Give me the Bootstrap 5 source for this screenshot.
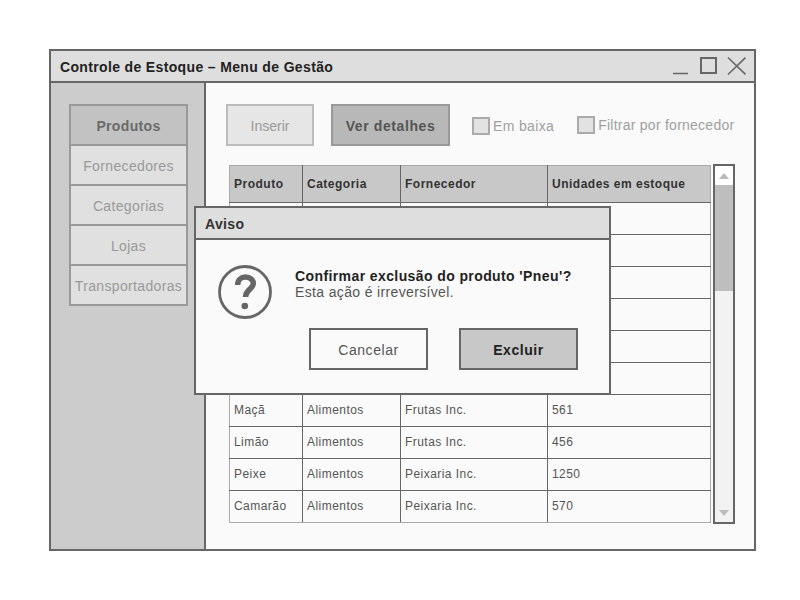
<!DOCTYPE html>
<html lang="pt">
<head>
    <meta charset="UTF-8">
    <meta name="viewport" content="width=device-width, initial-scale=1.0">
    <title>Controle de Estoque</title>
    <link href="https://cdn.jsdelivr.net/npm/bootstrap@5.3.3/dist/css/bootstrap.min.css" rel="stylesheet">
    <style>
        body {
            background-color: #fff;
            font-family: "Liberation Sans", Arial, sans-serif;
            font-size: 14px;
            letter-spacing: .35px;
            color: #000;
            padding: 49px 44px 49px 49px;
        }
        .app-window {
            position: relative;
            width: 707px;
            height: 502px;
            border: 2px solid #666;
            background-color: #fafafa;
        }
        .title-strip {
            height: 32px;
            padding: 0 8px 0 9px;
            background-color: #dedede;
            border-bottom: 2px solid #666;
            color: #222;
        }
        .title-text { font-weight: 700; padding-top: 2px; }
        .side-col {
            width: 155px;
            padding: 21px 16px 0 18px;
            background-color: #ccc;
            border-right: 2px solid #666;
        }
        .side-menu { width: 119px; border: 2px solid #999; border-bottom: 0; }
        .side-item {
            height: 40px;
            padding-top: 2px;
            background-color: #e0e0e0;
            border-bottom: 2px solid #999;
            color: #999;
            white-space: nowrap;
        }
        .side-item.current { background-color: #c2c2c2; color: #6a6a6a; font-weight: 700; }
        .content-col { padding: 21px 0 0 20px; }
        .act-btn {
            height: 42px;
            border: 2px solid #bbb;
            background-color: #e6e6e6;
            color: #999;
            font-size: 14px;
            padding: 2px 0 0;
            border-radius: 0;
        }
        .act-insert { width: 88px; margin-right: 17px; }
        .act-details { width: 119px; background-color: #b8b8b8; border-color: #999; color: #555; font-weight: 700; letter-spacing: .6px; }
        .check-group { gap: 3px; margin: 2px 0 0 22px; }
        .check-group.raised { margin: 0 0 0 23px; letter-spacing: .25px; }
        .check-box { width: 18px; height: 18px; border: 2px solid #aaa; background-color: #e2e2e2; }
        .check-label { color: #a0a0a0; white-space: nowrap; }
        .tbl-zone { margin-top: 19px; margin-left: 3px; gap: 2px; }
        .stock-table { width: 482px; border-collapse: collapse; table-layout: fixed; font-size: 12px; letter-spacing: .45px; background-color: #fafafa; color: #555; }
        .stock-table th, .stock-table td { padding: 0 0 2px 4px; height: 32px; border: 1px solid #666; vertical-align: middle; }
        .stock-table th { height: 37px; padding-bottom: 1px; background-color: #c8c8c8; color: #333; letter-spacing: .5px; }
        .stock-table tr > :first-child { border-left-color: #aaa; }
        .stock-table tr > :last-child { border-right-color: #aaa; }
        .stock-table tr:last-child td { border-bottom-color: #aaa; }
        .stock-table tr:first-child th { border-top-color: #aaa; }
        .scroll-rail { width: 22px; height: 360px; margin-top: -1px; border: 2px solid #666; background-color: #f2f2f2; }
        .scroll-end { height: 19px; }
        .scroll-thumb { height: 106px; background-color: #bebebe; }
        .dialog-box {
            position: absolute;
            left: 143px;
            top: 155px;
            width: 417px;
            height: 189px;
            border: 2px solid #666;
            background-color: #fafafa;
        }
        .dialog-head { height: 32px; padding: 2px 0 0 9px; background-color: #dedede; border-bottom: 2px solid #666; font-weight: 700; color: #333; }
        .dialog-msg { padding: 25px 0 0 22px; gap: 23px; line-height: 16px; color: #555; }
        .dialog-text { padding-top: 3px; }
        .dialog-text strong { color: #222; letter-spacing: .4px; }
        .dialog-actions { gap: 31px; padding: 0 31px 0 0; margin-top: 9px; }
        .dlg-btn { width: 119px; height: 42px; padding: 2px 0 0; font-size: 14px; letter-spacing: .55px; border: 2px solid #666; border-radius: 0; background-color: #fafafa; color: #555; }
        .dlg-btn.primary-act { background-color: #c8c8c8; color: #222; font-weight: 700; }
    </style>
</head>
<body>
    <div class="app-window d-flex flex-column">
        <div class="title-strip d-flex align-items-center justify-content-between">
            <span class="title-text">Controle de Estoque – Menu de Gestão</span>
            <svg width="73" height="20" viewBox="0 0 73 20" fill="none" stroke="#666">
                <path d="M0 17.5H15" stroke-width="1.5"/>
                <rect x="28" y="2" width="15" height="15" stroke-width="2"/>
                <path d="M55 1.5L72.5 18.5M72.5 1.5L55 18.5" stroke-width="1.6"/>
            </svg>
        </div>
        <div class="d-flex flex-grow-1">
            <div class="side-col flex-shrink-0">
                <div class="side-menu">
                    <div class="side-item current d-flex align-items-center justify-content-center">Produtos</div>
                    <div class="side-item d-flex align-items-center justify-content-center">Fornecedores</div>
                    <div class="side-item d-flex align-items-center justify-content-center">Categorias</div>
                    <div class="side-item d-flex align-items-center justify-content-center">Lojas</div>
                    <div class="side-item d-flex align-items-center justify-content-center">Transportadoras</div>
                </div>
            </div>
            <div class="content-col flex-grow-1">
                <div class="d-flex align-items-center">
                    <button class="btn act-btn act-insert">Inserir</button>
                    <button class="btn act-btn act-details">Ver detalhes</button>
                    <div class="check-group d-flex align-items-center">
                        <span class="check-box"></span><span class="check-label">Em baixa</span>
                    </div>
                    <div class="check-group raised d-flex align-items-center">
                        <span class="check-box"></span><span class="check-label">Filtrar por fornecedor</span>
                    </div>
                </div>
                <div class="tbl-zone d-flex align-items-start">
                    <table class="stock-table">
                        <colgroup><col style="width:73px"><col style="width:98px"><col style="width:147px"><col></colgroup>
                        <thead>
                            <tr><th>Produto</th><th>Categoria</th><th>Fornecedor</th><th>Unidades em estoque</th></tr>
                        </thead>
                        <tbody>
                            <tr><td></td><td></td><td></td><td></td></tr>
                            <tr><td></td><td></td><td></td><td></td></tr>
                            <tr><td></td><td></td><td></td><td></td></tr>
                            <tr><td></td><td></td><td></td><td></td></tr>
                            <tr><td></td><td></td><td></td><td></td></tr>
                            <tr><td></td><td></td><td></td><td></td></tr>
                            <tr><td>Maçã</td><td>Alimentos</td><td>Frutas Inc.</td><td>561</td></tr>
                            <tr><td>Limão</td><td>Alimentos</td><td>Frutas Inc.</td><td>456</td></tr>
                            <tr><td>Peixe</td><td>Alimentos</td><td>Peixaria Inc.</td><td>1250</td></tr>
                            <tr><td>Camarão</td><td>Alimentos</td><td>Peixaria Inc.</td><td>570</td></tr>
                        </tbody>
                    </table>
                    <div class="scroll-rail d-flex flex-column">
                        <div class="scroll-end d-flex justify-content-center align-items-center bg-white">
                            <svg width="10" height="6" viewBox="0 0 10 6"><path d="M0 6L5 0L10 6Z" fill="#bbb"/></svg>
                        </div>
                        <div class="scroll-thumb"></div>
                        <div class="flex-grow-1"></div>
                        <div class="scroll-end d-flex justify-content-center align-items-center">
                            <svg width="10" height="6" viewBox="0 0 10 6"><path d="M0 0L10 0L5 6Z" fill="#bbb"/></svg>
                        </div>
                    </div>
                </div>
            </div>
        </div>
        <div class="dialog-box">
            <div class="dialog-head d-flex align-items-center">Aviso</div>
            <div class="dialog-msg d-flex">
                <svg width="54" height="54" viewBox="0 0 54 54" class="flex-shrink-0">
                    <circle cx="27" cy="27" r="25.5" fill="none" stroke="#666" stroke-width="2.8"/>
                    <path d="M19.7 20C19.7 15 23 12 27.5 12C32 12 35.3 15 35.3 18.5C35.3 24 27.5 24.5 27.5 32" fill="none" stroke="#666" stroke-width="5.5"/>
                    <circle cx="26.8" cy="41" r="3.3" fill="#666"/>
                </svg>
                <div class="dialog-text"><strong>Confirmar exclusão do produto 'Pneu'?</strong><br>Esta ação é irreversível.</div>
            </div>
            <div class="dialog-actions d-flex justify-content-end">
                <button class="btn dlg-btn">Cancelar</button>
                <button class="btn dlg-btn primary-act">Excluir</button>
            </div>
        </div>
    </div>
</body>
</html>
